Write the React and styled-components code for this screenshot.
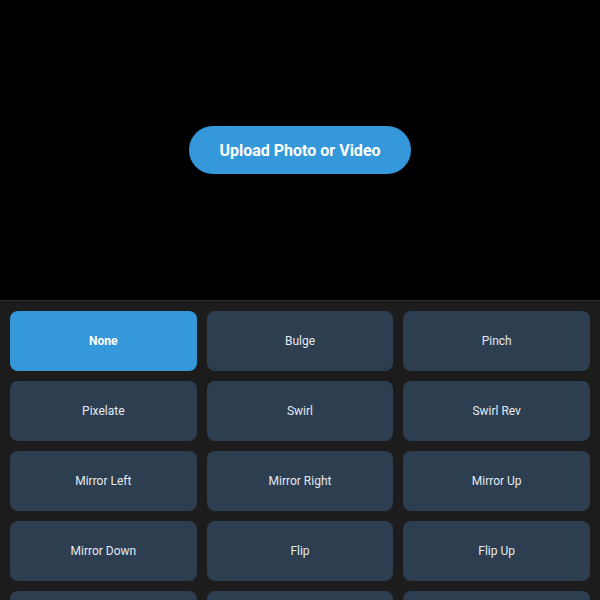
import styled, { createGlobalStyle } from "styled-components";

const Global = createGlobalStyle`
  html, body {
    margin: 0;
    padding: 0;
    background: #000;
    font-family: Roboto, "Liberation Sans", sans-serif;
  }
`;

const Page = styled.div`
  width: 600px;
  height: 600px;
  display: flex;
  flex-direction: column;
  overflow: hidden;
`;

// preview area with upload button
const Stage = styled.div`
  height: 300px;
  flex-shrink: 0;
  background: #000;
  display: flex;
  align-items: center;
  justify-content: center;
`;

const UploadButton = styled.button`
  height: 48px;
  padding: 0 30px;
  border: none;
  border-radius: 24px;
  background: #3498db;
  color: #fff;
  font-family: Roboto, "Liberation Sans", sans-serif;
  font-size: 16px;
  font-weight: 700;
  cursor: pointer;
`;

// effects panel
const Panel = styled.div`
  flex: 1;
  background: #1c1c1c;
  border-top: 1px solid #2e2e2e;
  padding: 10px;
  overflow: hidden;
`;

const Grid = styled.div`
  display: grid;
  grid-template-columns: repeat(3, 1fr);
  gap: 10px;
`;

const EffectButton = styled.button`
  height: 60px;
  border: none;
  border-radius: 8px;
  background: ${(p) => (p.$active ? "#3498db" : "#2c3e50")};
  color: ${(p) => (p.$active ? "#fff" : "#e4e9ef")};
  font-family: Roboto, "Liberation Sans", sans-serif;
  font-size: 12px;
  font-weight: ${(p) => (p.$active ? 700 : 400)};
  cursor: pointer;
`;

const effects = [
  "None", "Bulge", "Pinch",
  "Pixelate", "Swirl", "Swirl Rev",
  "Mirror Left", "Mirror Right", "Mirror Up",
  "Mirror Down", "Flip", "Flip Up",
];

export default function App() {
  return (
    <Page>
      <Global />
      <Stage>
        <UploadButton>Upload Photo or Video</UploadButton>
      </Stage>
      <Panel>
        <Grid>
          {effects.map((name, i) => (
            <EffectButton key={name} $active={i === 0}>{name}</EffectButton>
          ))}
          {/* next row, only its top edge is in view */}
          <EffectButton aria-hidden />
          <EffectButton aria-hidden />
          <EffectButton aria-hidden />
        </Grid>
      </Panel>
    </Page>
  );
}
